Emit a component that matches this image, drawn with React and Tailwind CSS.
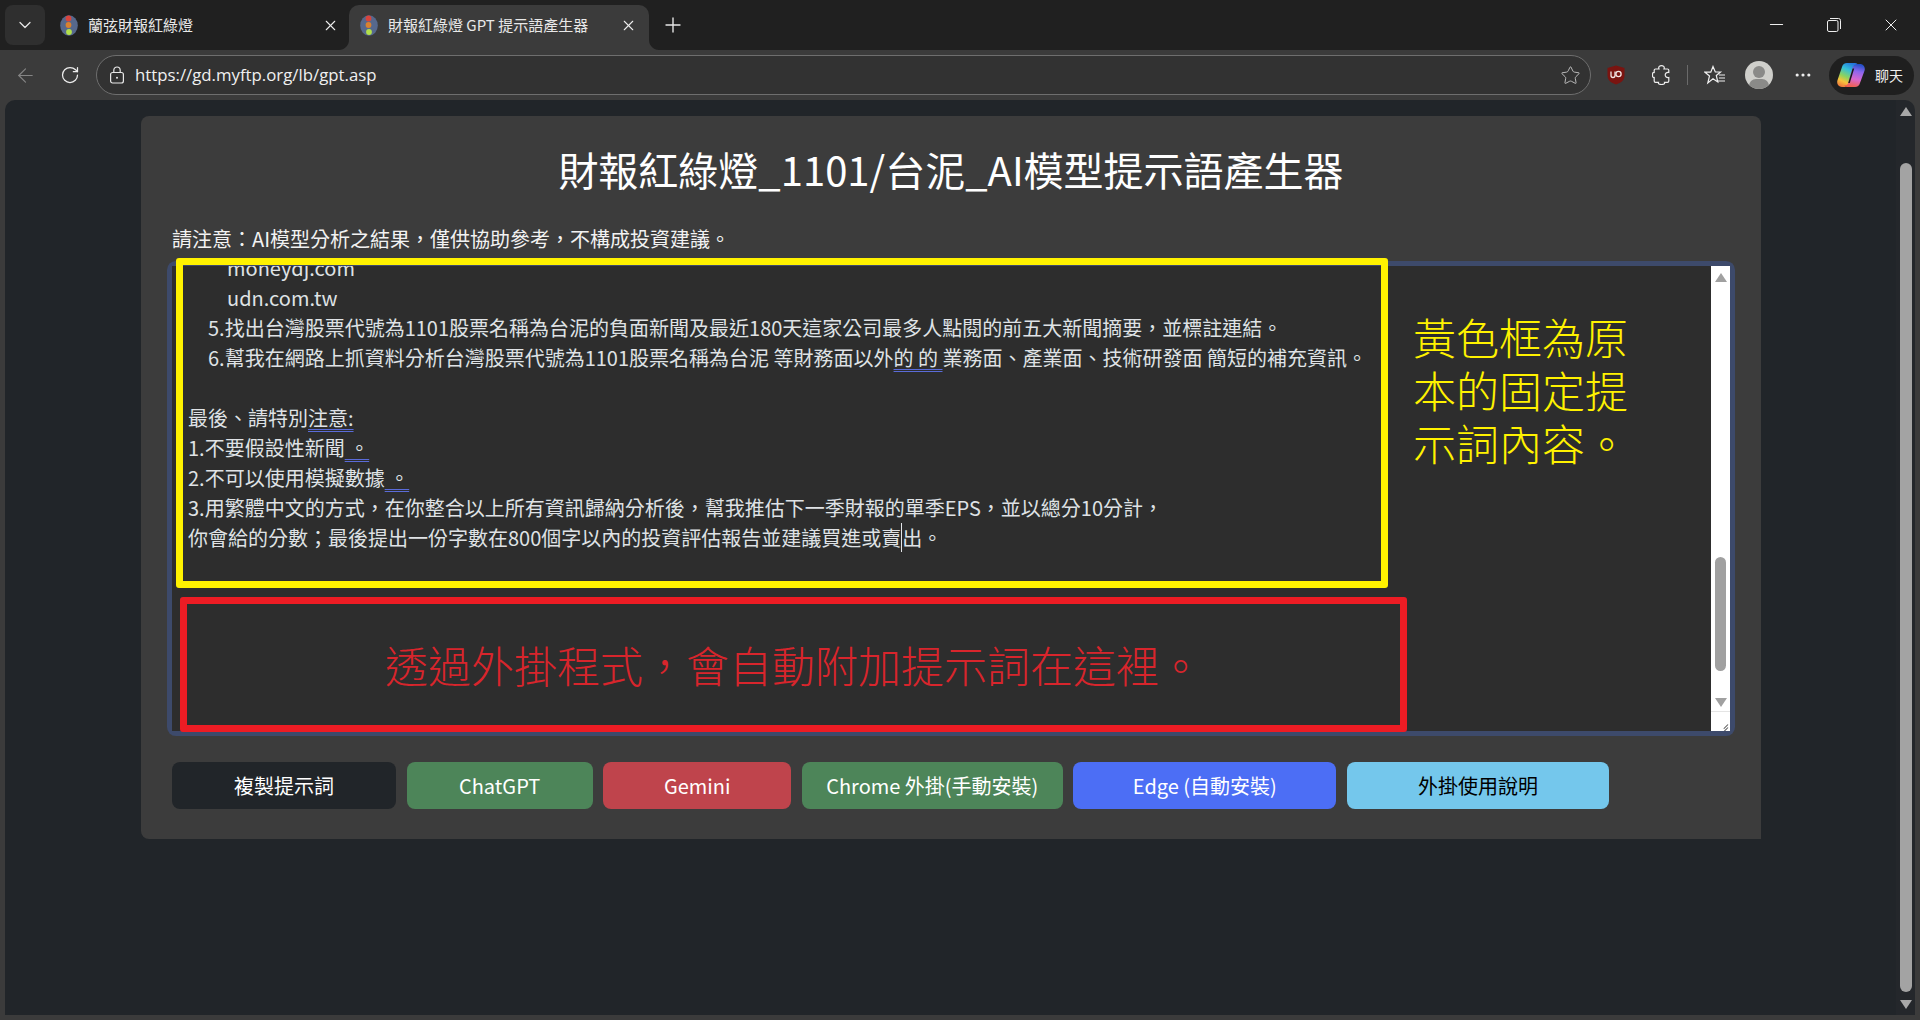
import { ChevronDown, X, Plus, ArrowLeft, RotateCw, Star, Minus, MoreHorizontal } from 'lucide-react'

const lineClass = 'h-[30px] whitespace-pre'
const dbl = 'underline decoration-double decoration-[#5a6bd8] decoration-1 underline-offset-[3px]'

function Favicon() {
  return (
    <svg width="18" height="21" viewBox="0 0 18 21" className="shrink-0">
      <ellipse cx="9" cy="10.5" rx="8.8" ry="10.2" fill="#56688c" />
      <circle cx="8.5" cy="3.5" r="2.9" fill="#d8443c" />
      <circle cx="8.5" cy="10" r="2.9" fill="#d8812f" />
      <circle cx="9" cy="17" r="2.9" fill="#b2e04a" />
    </svg>
  )
}

function Tab({ title, active }) {
  return (
    <div className={`relative flex items-center h-[45px] w-[300px] pl-[11px] pb-[5px] rounded-t-[10px] ${active ? 'bg-[#3b3b3b] ml-[5px] pr-[12px]' : 'ml-[15px] -mr-[5px] pr-[10px]'}`}>
      <Favicon />
      <span className="ml-[10px] flex-1 text-[15px] leading-[20px] text-[#e8e8e8] whitespace-pre">{title}</span>
      <X size={17} strokeWidth={1.5} className="text-[#ededed]" />
      {active && (
        <>
          <svg width="10" height="10" viewBox="0 0 10 10" className="absolute -left-[10px] bottom-0">
            <path d="M10 0v10H0c5.5 0 10-4.5 10-10z" fill="#3b3b3b" />
          </svg>
          <svg width="10" height="10" viewBox="0 0 10 10" className="absolute -right-[10px] bottom-0">
            <path d="M0 0v10h10C4.5 10 0 5.5 0 0z" fill="#3b3b3b" />
          </svg>
        </>
      )}
    </div>
  )
}

function TabStrip() {
  return (
    <div className="h-[50px] shrink-0 bg-[#202020] flex items-end relative">
      <div className="absolute left-[5px] top-[5px] w-[40px] h-[40px] rounded-[8px] bg-[#2f2f2f] flex items-center justify-center">
        <ChevronDown size={20} strokeWidth={1.5} className="text-[#e6e6e6]" />
      </div>
      <div className="flex items-end pl-[34px]">
        <Tab title="蘭弦財報紅綠燈" />
        <Tab title="財報紅綠燈 GPT 提示語產生器" active />
        <Plus size={24} strokeWidth={1.4} className="text-[#e6e6e6] ml-[12px] mb-[13px]" />
      </div>
      <div className="ml-auto flex items-center self-start h-[50px] pr-[19px] gap-[40px] text-[#eeeeee]">
        <Minus size={21} strokeWidth={1.2} className="-mt-[2px]" />
        <svg width="14" height="14" viewBox="0 0 14 14" fill="none" stroke="currentColor" strokeWidth="1" className="-mt-[1px]">
          <rect x="0.5" y="2.5" width="10.5" height="11" rx="1.5" />
          <path d="M3 0.5h8.5a2 2 0 0 1 2 2V11" />
        </svg>
        <X size={20} strokeWidth={1.2} className="-mt-[1px]" />
      </div>
    </div>
  )
}

function Copilot() {
  return (
    <svg width="28" height="26" viewBox="0 0 28 26" className="shrink-0">
      <defs>
        <linearGradient id="cpa" x1="0.7" y1="0" x2="0.3" y2="1">
          <stop offset="0" stopColor="#2474dc" />
          <stop offset="0.3" stopColor="#33c0d8" />
          <stop offset="0.6" stopColor="#8fd35c" />
          <stop offset="0.8" stopColor="#f7c23c" />
          <stop offset="1" stopColor="#f0803c" />
        </linearGradient>
        <linearGradient id="cpb" x1="0.6" y1="0" x2="0.4" y2="1">
          <stop offset="0" stopColor="#2450c8" />
          <stop offset="0.3" stopColor="#8c66ee" />
          <stop offset="0.65" stopColor="#d868d0" />
          <stop offset="1" stopColor="#f0604a" />
        </linearGradient>
      </defs>
      <path d="M10 1h8c1.5 0 2.5.7 3 2-1.5-.8-3.5 0-4.2 2L13 19c-.9 3.5-3 6-6.5 6H5c-3.4 0-5.5-3-4.6-6.5L5 5c.7-2.5 2.5-4 5-4z" fill="url(#cpa)" />
      <path d="M18 25h-8c-1.5 0-2.5-.7-3-2 1.5.8 3.5 0 4.2-2L15 7c.9-3.5 3-5 6.5-5H23c3.4 0 5.5 3 4.6 6.5L23 21c-.7 2.5-2.5 4-5 4z" fill="url(#cpb)" />
      <path d="M17.2 6.5 12.8 21h-1.6L15.6 6.5z" fill="#1a1a1a" />
    </svg>
  )
}

function Toolbar() {
  return (
    <div className="h-[50px] shrink-0 bg-[#3b3b3b] flex items-center relative">
      <ArrowLeft size={23} strokeWidth={1.2} className="ml-[14px] text-[#858585]" />
      <RotateCw size={20} strokeWidth={1.5} className="ml-[23px] text-[#ededed]" />
      <div className="ml-[16px] w-[1495px] h-[40px] rounded-full border border-[#6e6e6e] bg-[#323232] flex items-center pl-[12px] pr-[9px]">
        <svg width="16" height="18" viewBox="0 0 16 18" fill="none" stroke="#e8e8e8" strokeWidth="1.2" className="shrink-0">
          <rect x="1.6" y="6.5" width="12.8" height="10.5" rx="2" />
          <path d="M4.8 6.5V4.2a3.2 3.2 0 0 1 6.4 0v2.3" />
          <circle cx="8" cy="11.7" r="1" fill="#e8e8e8" stroke="none" />
        </svg>
        <span className="ml-[10px] text-[16.8px] text-[#f0f0f0] font-['Open_Sans',sans-serif]">https://gd.myftp.org/lb/gpt.asp</span>
        <Star size={21} strokeWidth={1.1} className="ml-auto text-[#bdbdbd]" />
      </div>
      <svg width="18" height="20" viewBox="0 0 18 20" className="ml-[16px] shrink-0">
        <path d="M9 0.5 17.5 3v7.5c0 4.5-3.5 7.5-8.5 9-5-1.5-8.5-4.5-8.5-9V3z" fill="#7a1410" />
        <path d="M4 6.5v4a2 2 0 0 0 4 0v-4" fill="none" stroke="#f3e6e4" strokeWidth="1.3" />
        <circle cx="11.5" cy="9" r="2.6" fill="none" stroke="#f3e6e4" strokeWidth="1.3" />
      </svg>
      <svg width="20" height="20" viewBox="0 0 20 20" fill="none" stroke="#eeeeee" strokeWidth="1.2" className="ml-[27px] shrink-0">
        <path d="M7 4C6 1.5 8 .6 9.5 .6S13 1.5 12 4h3.5c.8 0 1.3.5 1.3 1.3V7.5C14.5 7 13.2 8.5 13.2 10s1.3 3 3.6 2.5V16c0 .8-.5 1.3-1.3 1.3h-3C13 19 11.5 19.5 9.5 19.5S6 19 6.5 17.3h-3c-.8 0-1.3-.5-1.3-1.3V12.5C.5 13 .5 11 .5 10s0-3 1.7-2.5V5.3C2.2 4.5 2.7 4 3.5 4z" />
      </svg>
      <div className="ml-[15px] w-px h-[20px] bg-[#6a6a6a] shrink-0" />
      <svg width="22" height="20" viewBox="0 0 22 20" fill="none" stroke="#f0f0f0" strokeWidth="1.2" className="ml-[16px] shrink-0">
        <path d="M9 1.5 11.3 7H16.5L12.3 10.5 13.8 17 9 13.8 3.8 18 5.5 11 1 7.2H6.8z" />
        <path d="M15 10h6M15 13h6M14 16h7" />
      </svg>
      <div className="ml-[19px] w-[28px] h-[28px] rounded-full bg-[#cfcfcb] overflow-hidden relative shrink-0">
        <div className="absolute left-[8px] top-[5px] w-[12px] h-[12px] rounded-full bg-[#8a8a88]" />
        <div className="absolute left-[4px] top-[18px] w-[20px] h-[14px] rounded-full bg-[#8a8a88]" />
      </div>
      <MoreHorizontal size={20} strokeWidth={1.8} className="ml-[20px] text-[#ededed]" />
      <div className="ml-[16px] w-[85px] h-[39px] rounded-full bg-[#1f1f1f] flex items-center pl-[8px] shrink-0">
        <Copilot />
        <span className="ml-[10px] text-[14px] text-[#f0f0f0]">聊天</span>
      </div>
    </div>
  )
}

function Scrollbar() {
  return (
    <div className="w-[19px] shrink-0 bg-white flex flex-col items-center relative">
      <div className="mt-[7px] w-0 h-0 border-x-[6px] border-x-transparent border-b-[9px] border-b-[#a0a0a0]" />
      <div className="mt-[275px] w-[11px] h-[114px] rounded-full bg-[#a0a0a0]" />
      <div className="mt-[27px] w-0 h-0 border-x-[6px] border-x-transparent border-t-[9px] border-t-[#a0a0a0]" />
      <div className="mt-[4px] w-full flex-1 border-t border-[#e4e4e4] relative overflow-hidden">
        <div className="absolute right-[2px] bottom-[3px] w-[10px] h-px bg-[#555] -rotate-45 origin-right" />
        <div className="absolute right-[2px] bottom-[6px] w-[6px] h-px bg-[#555] -rotate-45 origin-right" />
      </div>
    </div>
  )
}

function PromptBox() {
  return (
    <div className="relative rounded-[4px] shadow-[0_0_0_5px_#3d4a6b]">
      <div className="flex h-[465px] bg-[#2d2d2d] overflow-hidden">
        <div className="flex-1 pl-[16px] -mt-[13px] text-[20px] leading-[30px] text-[#dfe2e5]">
          <div className={`${lineClass} pl-[39px]`}>moneydj.com</div>
          <div className={`${lineClass} pl-[39px]`}>udn.com.tw</div>
          <div className={`${lineClass} pl-[20px]`}>5.找出台灣股票代號為1101股票名稱為台泥的負面新聞及最近180天這家公司最多人點閱的前五大新聞摘要，並標註連結。</div>
          <div className={`${lineClass} pl-[20px]`}>6.幫我在網路上抓資料分析台灣股票代號為1101股票名稱為台泥 等財務面以外<span className={dbl}>的 的 </span>業務面、產業面、技術研發面 簡短的補充資訊。</div>
          <div className={lineClass}> </div>
          <div className={lineClass}>最後、請特別<span className={dbl}>注意:</span></div>
          <div className={lineClass}>1.不要假設性新聞<span className={dbl}> 。</span></div>
          <div className={lineClass}>2.不可以使用模擬數據<span className={dbl}> 。</span></div>
          <div className={lineClass}>3.用繁體中文的方式，在你整合以上所有資訊歸納分析後，幫我推估下一季財報的單季EPS，並以總分10分計，</div>
          <div className={lineClass}>你會給的分數；最後提出一份字數在800個字以內的投資評估報告並建議買進或賣<span className="border-l border-[#e2e5e8]">出</span>。</div>
        </div>
        <Scrollbar />
      </div>
      {/* yellow / red annotation frames drawn over the textarea */}
      <div className="absolute left-[4px] -top-[8px] w-[1212px] h-[330px] border-[7px] border-[#fff200] rounded-[3px]" />
      <div className="absolute left-[1241px] top-[44px] w-[232px] text-[43px] leading-[53px] text-[#fff200] font-light">黃色框為原本的固定提示詞內容。</div>
      <div className="absolute left-[8px] top-[331px] w-[1227px] h-[135px] border-[7px] border-[#ed1c24] rounded-[3px] flex items-center justify-center text-[43px] text-[#d8252c] font-light">
        透過外掛程式，會自動附加提示詞在這裡。
      </div>
    </div>
  )
}

function ActionButton({ children, className }) {
  return (
    <button className={`h-[47px] rounded-[8px] text-[20px] shrink-0 ${className}`}>{children}</button>
  )
}

export default function App() {
  return (
    <div lang="zh-Hant" className="h-[1020px] w-[1920px] flex flex-col overflow-hidden bg-[#3b3b3b] font-['Noto_Sans_CJK_TC',sans-serif]">
      <TabStrip />
      <Toolbar />
      <div className="flex-1 flex pl-[5px] pr-[5px] pb-[5px] min-h-0">
        <div className="flex-1 bg-[#212529] rounded-tl-[10px] pl-[136px] pt-[16px]">
          <div className="w-[1620px] h-[723px] bg-[#3c3c3c] rounded-t-[8px] rounded-bl-[8px] pt-[29px] px-[31px]">
            <h2 className="text-center text-[40px] leading-[48px] text-white">財報紅綠燈_1101/台泥_AI模型提示語產生器</h2>
            <p className="mt-[31px] text-[20px] leading-[30px] text-[#f2f2f2]">請注意：AI模型分析之結果，僅供協助參考，不構成投資建議。</p>
            <div className="mt-[12px]">
              <PromptBox />
            </div>
            <div className="mt-[31px] flex gap-[10.6px]">
              <ActionButton className="w-[224px] bg-[#212529] text-white">複製提示詞</ActionButton>
              <ActionButton className="w-[186px] bg-[#4d8559] text-white">ChatGPT</ActionButton>
              <ActionButton className="w-[188px] bg-[#bf444c] text-white">Gemini</ActionButton>
              <ActionButton className="w-[261px] bg-[#4d8559] text-white">Chrome 外掛(手動安裝)</ActionButton>
              <ActionButton className="w-[263px] bg-[#4c6ef5] text-white">Edge (自動安裝)</ActionButton>
              <ActionButton className="w-[262px] bg-[#74c7ec] text-black">外掛使用說明</ActionButton>
            </div>
          </div>
        </div>
        <div className="w-[19px] shrink-0 bg-[#24272b] rounded-tr-[10px] flex flex-col items-center">
          <div className="mt-[7px] w-0 h-0 border-x-[6px] border-x-transparent border-b-[9px] border-b-[#a8a8a8]" />
          <div className="mt-[47px] w-[12px] h-[829px] rounded-full bg-[#a3a3a3]" />
          <div className="mt-[8px] w-0 h-0 border-x-[6px] border-x-transparent border-t-[9px] border-t-[#a8a8a8]" />
        </div>
      </div>
    </div>
  )
}
